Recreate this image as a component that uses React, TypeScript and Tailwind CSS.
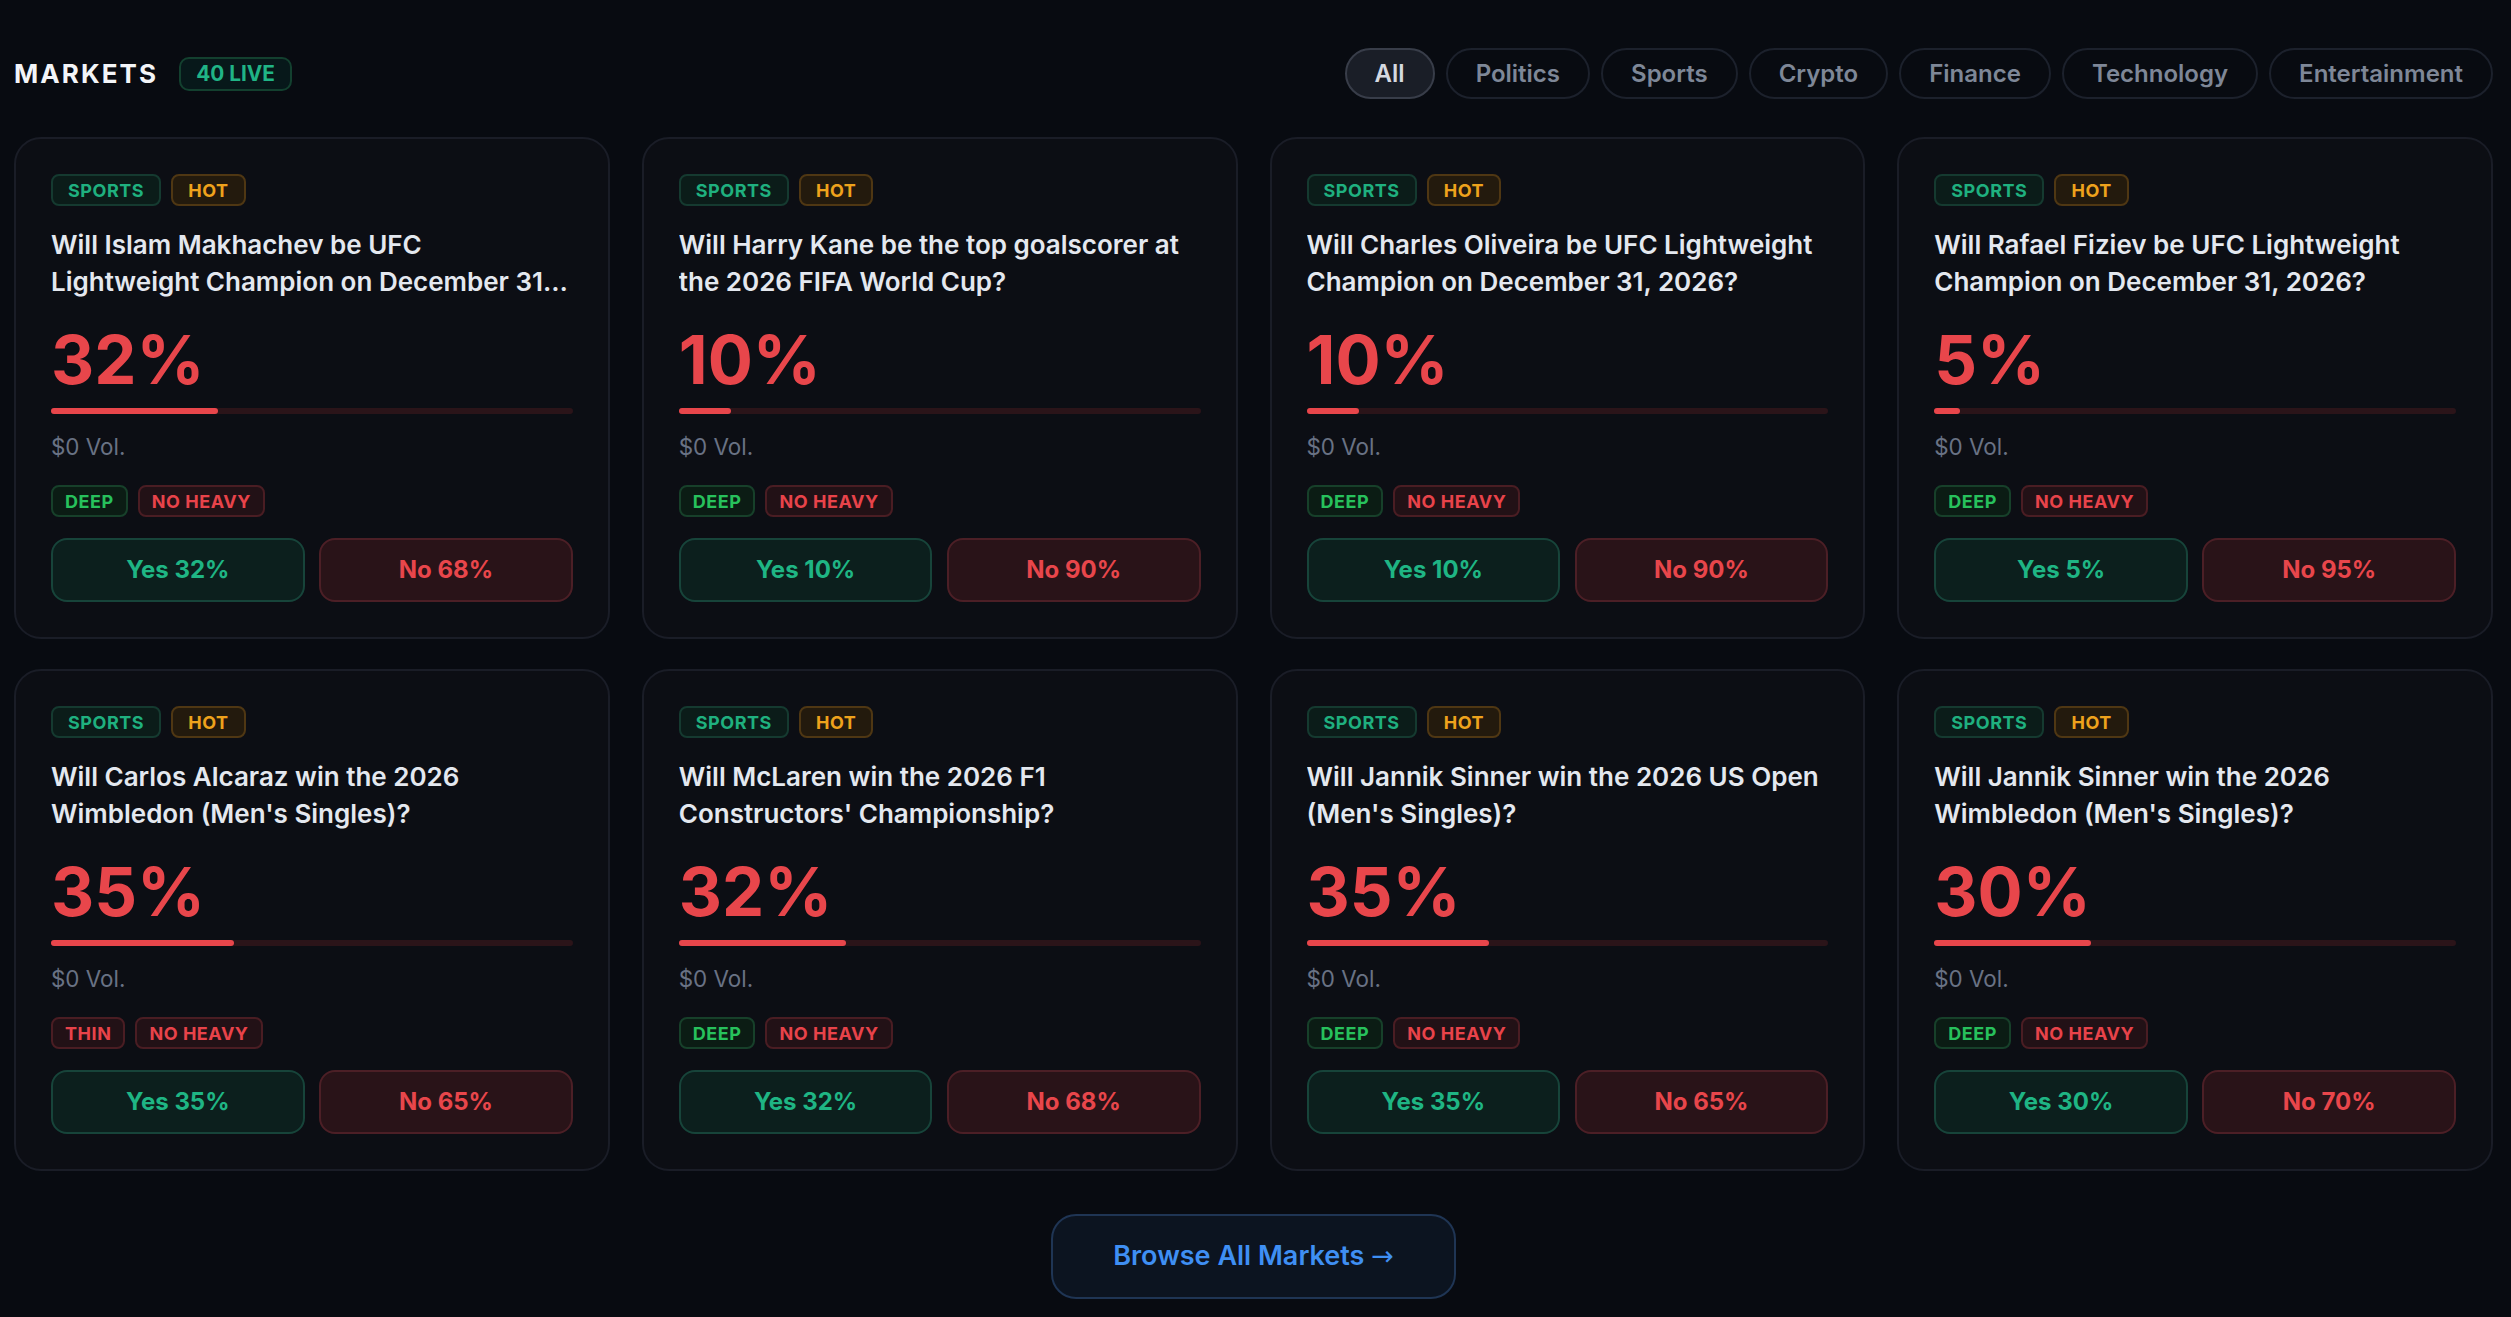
type Tone = "teal" | "amber" | "green" | "red";

type Market = {
  title: string;
  pct: number;
  depth: "DEEP" | "THIN";
};

const markets: Market[] = [
  { title: "Will Islam Makhachev be UFC Lightweight Champion on December 31, 2026?", pct: 32, depth: "DEEP" },
  { title: "Will Harry Kane be the top goalscorer at the 2026 FIFA World Cup?", pct: 10, depth: "DEEP" },
  { title: "Will Charles Oliveira be UFC Lightweight Champion on December 31, 2026?", pct: 10, depth: "DEEP" },
  { title: "Will Rafael Fiziev be UFC Lightweight Champion on December 31, 2026?", pct: 5, depth: "DEEP" },
  { title: "Will Carlos Alcaraz win the 2026 Wimbledon (Men's Singles)?", pct: 35, depth: "THIN" },
  { title: "Will McLaren win the 2026 F1 Constructors' Championship?", pct: 32, depth: "DEEP" },
  { title: "Will Jannik Sinner win the 2026 US Open (Men's Singles)?", pct: 35, depth: "DEEP" },
  { title: "Will Jannik Sinner win the 2026 Wimbledon (Men's Singles)?", pct: 30, depth: "DEEP" },
];

const filters = ["All", "Politics", "Sports", "Crypto", "Finance", "Technology", "Entertainment"];

const toneClass: Record<Tone, string> = {
  teal: "border-[#153a30] bg-[#0b1c19] text-[#1fb07f]",
  amber: "border-[#4f3713] bg-[#231a0d] text-[#eea21c]",
  green: "border-[#17402a] bg-[#0b1c14] text-[#27c15c]",
  red: "border-[#4a1d23] bg-[#221116] text-[#e8434a]",
};

function Tag({ label, tone, wide }: { label: string; tone: Tone; wide?: boolean }) {
  return (
    <span
      className={`flex h-[32px] items-center rounded-[8px] border-2 text-[18px] font-bold tracking-[0.03em] ${
        wide ? "px-[15px]" : "px-[12px]"
      } ${toneClass[tone]}`}
    >
      {label}
    </span>
  );
}

function MarketCard({ m }: { m: Market }) {
  return (
    <div className="flex flex-col rounded-[27px] border-2 border-[#1a1d27] bg-[#0c0e14] p-[35px]">
      <div className="flex gap-[10px]">
        <Tag label="SPORTS" tone="teal" wide />
        <Tag label="HOT" tone="amber" wide />
      </div>
      <p className="mt-[20px] line-clamp-2 h-[74px] text-[26px] leading-[37px] font-semibold text-[#e4e8ef]">
        {m.title}
      </p>
      <div className="mt-[19px] text-[67px] leading-[81px] font-bold text-[#e8464b]">{m.pct}%</div>
      <div className="mt-[8px] h-[6px] rounded-full bg-[#2b1419]">
        <div className="h-full rounded-full bg-[#e8464b]" style={{ width: `${m.pct}%` }} />
      </div>
      <div className="mt-[16px] text-[22.4px] leading-[34px] text-[#697284]">$0 Vol.</div>
      <div className="mt-[21px] flex gap-[10px]">
        <Tag label={m.depth} tone={m.depth === "DEEP" ? "green" : "red"} />
        <Tag label="NO HEAVY" tone="red" />
      </div>
      <div className="mt-[21px] grid grid-cols-2 gap-[14.5px]">
        <button className="h-[64px] rounded-[16px] border-2 border-[#17443a] bg-[#0c1f1d] text-[24px] font-bold text-[#1fb584]">
          Yes {m.pct}%
        </button>
        <button className="h-[64px] rounded-[16px] border-2 border-[#4c1f26] bg-[#291318] text-[24px] font-bold text-[#e8464b]">
          No {100 - m.pct}%
        </button>
      </div>
    </div>
  );
}

export default function App() {
  return (
    <div className="min-h-screen bg-[#080b11] pl-[14px] pr-[18px] pt-[48px] pb-[20px] font-['Inter','Noto_Sans',sans-serif]">
      <div className="flex h-[51px] items-center justify-between">
        <div className="flex items-center gap-[21px]">
          <h2 className="text-[26px] font-bold tracking-[0.08em] text-[#f3f5f8]">MARKETS</h2>
          <span className="flex h-[34px] items-center rounded-[10px] border-2 border-[#13402f] bg-[#07181a] px-[15px] text-[20.8px] font-bold text-[#20b486]">
            40 LIVE
          </span>
        </div>
        <div className="flex gap-[11px]">
          {filters.map((f, i) => (
            <button
              key={f}
              className={`flex h-[51px] items-center rounded-full border-2 px-[28px] text-[24px] font-semibold ${
                i === 0
                  ? "border-[#383d49] bg-[#1a1e27] text-[#d5d9e0]"
                  : "border-[#1c212c] bg-transparent text-[#7e8797]"
              }`}
            >
              {f}
            </button>
          ))}
        </div>
      </div>

      <div className="mt-[38px] grid grid-cols-4 gap-x-[32px] gap-y-[30px]">
        {markets.map((m, i) => (
          <MarketCard key={i} m={m} />
        ))}
      </div>

      <div className="mt-[43px] flex justify-center">
        <button className="h-[85px] w-[405px] rounded-[25px] border-2 border-[#1f3554] bg-[#0c1420] text-[27px] font-semibold text-[#3f8ff3]">
          Browse All Markets{" "}
          <span className="font-['DejaVu_Sans',sans-serif] font-normal">→</span>
        </button>
      </div>
    </div>
  );
}
